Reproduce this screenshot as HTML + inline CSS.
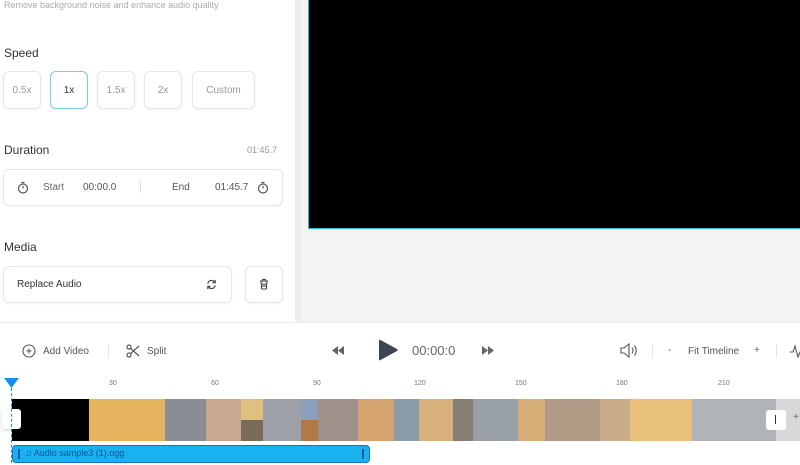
<!DOCTYPE html>
<html><head><meta charset="utf-8"><style>
*{box-sizing:border-box;margin:0;padding:0}
body{width:800px;height:465px;overflow:hidden;font-family:"Liberation Sans",sans-serif;background:#fff;position:relative;color:#333}
.a{position:absolute}
.btn{position:absolute;border:1px solid #e5e7ea;border-radius:6px;background:#fff;font-size:10px;color:#999;display:flex;align-items:center;justify-content:center;box-shadow:0 1px 2px rgba(0,0,0,.05)}
.h{font-size:12px;color:#333;position:absolute;left:4px}
.t{font-size:10px;color:#444}
.tick{position:absolute;top:405px;width:1px;height:4px;background:#ccc}
.lab{position:absolute;top:380px;font-size:7px;color:#777}
</style></head><body>
<div class="a" style="left:0;top:0;width:295px;height:322px;background:#fff"></div>
<div class="a" style="left:295px;top:0;width:6px;height:322px;background:#ededee"></div>
<div class="a" style="left:301px;top:0;width:499px;height:322px;background:#f4f4f5"></div>
<div class="a" style="left:308px;top:-2px;width:494px;height:231px;background:#000;border:1.5px solid #2ab7c9;border-top:none;border-right:none"></div>

<div class="a" style="left:4px;top:0;font-size:9px;color:#aaa">Remove background noise and enhance audio quality</div>
<div class="h" style="top:46px">Speed</div>
<div class="btn" style="left:3px;top:71px;width:38px;height:38px">0.5x</div>
<div class="btn" style="left:50px;top:71px;width:38px;height:38px;border-color:#7fcbe0;color:#333">1x</div>
<div class="btn" style="left:97px;top:71px;width:38px;height:38px">1.5x</div>
<div class="btn" style="left:144px;top:71px;width:38px;height:38px">2x</div>
<div class="btn" style="left:192px;top:71px;width:63px;height:38px">Custom</div>
<div class="h" style="top:143px">Duration</div>
<div class="a" style="left:247px;top:145px;font-size:9px;color:#999">01:45.7</div>
<div class="btn" style="left:3px;top:169px;width:280px;height:37px"></div>
<svg class="a" style="left:17px;top:181px" width="12" height="13" viewBox="0 0 12 13"><circle cx="6" cy="7.5" r="4.5" fill="none" stroke="#555" stroke-width="1.2"/><path d="M4.5 1.5h3M6 7.5V5" stroke="#555" stroke-width="1.2"/></svg>
<div class="a t" style="left:43px;top:182px;color:#666">Start</div>
<div class="a t" style="left:83px;top:182px;color:#555">00:00.0</div>
<div class="a" style="left:140px;top:181px;width:1px;height:12px;background:#ddd"></div>
<div class="a t" style="left:172px;top:182px;color:#555">End</div>
<div class="a t" style="left:215px;top:182px;color:#555">01:45.7</div>
<svg class="a" style="left:257px;top:181px" width="12" height="13" viewBox="0 0 12 13"><circle cx="6" cy="7.5" r="4.5" fill="none" stroke="#555" stroke-width="1.2"/><path d="M4.5 1.5h3M6 7.5V5" stroke="#555" stroke-width="1.2"/></svg>
<div class="h" style="top:240px">Media</div>
<div class="btn" style="left:3px;top:266px;width:229px;height:37px"></div>
<div class="a t" style="left:17px;top:279px;color:#333">Replace Audio</div>
<svg class="a" style="left:206px;top:279px" width="11" height="11" viewBox="0 0 12 12"><path d="M2 5a4 4 0 0 1 7-2l1 1M10 7a4 4 0 0 1-7 2l-1-1" fill="none" stroke="#444" stroke-width="1.3"/><path d="M10 1v3H7M2 11V8h3" fill="none" stroke="#444" stroke-width="1.3"/></svg>
<div class="btn" style="left:245px;top:266px;width:38px;height:37px"></div>
<svg class="a" style="left:259px;top:278px" width="10" height="12" viewBox="0 0 10 12"><path d="M1 3h8M3.5 3V1.5h3V3M2 3l.7 8h4.6L8 3M4 5v4M6 5v4" fill="none" stroke="#444" stroke-width="1.1"/></svg>

<div class="a" style="left:0;top:322px;width:800px;height:1px;background:#eee"></div>
<svg class="a" style="left:22px;top:344px" width="14" height="14"><circle cx="7" cy="7" r="6" fill="none" stroke="#555" stroke-width="1.1"/><path d="M7 4.5v5M4.5 7h5" stroke="#555" stroke-width="1.1"/></svg>
<div class="a t" style="left:43px;top:346px;color:#555">Add Video</div>
<div class="a" style="left:108px;top:344px;width:1px;height:14px;background:#e5e5e5"></div>
<svg class="a" style="left:126px;top:344px" width="14" height="14" viewBox="0 0 14 14"><circle cx="3" cy="3" r="2" fill="none" stroke="#555" stroke-width="1.2"/><circle cx="3" cy="11" r="2" fill="none" stroke="#555" stroke-width="1.2"/><path d="M4.5 4.3L13 12M4.5 9.7L13 2" stroke="#555" stroke-width="1.2"/></svg>
<div class="a t" style="left:147px;top:346px;color:#555">Split</div>
<svg class="a" style="left:332px;top:346px" width="12" height="9"><path d="M6 0v9L0 4.5zM12 0v9L6 4.5z" fill="#666"/></svg>
<svg class="a" style="left:378px;top:339px" width="20" height="22"><path d="M1 1.5Q1 0 2.5 1L19 10Q20 11 19 12L2.5 21Q1 22 1 20.5z" fill="#3d4656"/></svg>
<div class="a" style="left:412px;top:343px;font-size:13px;color:#666">00:00:0</div>
<svg class="a" style="left:482px;top:346px" width="12" height="9"><path d="M0 0v9L6 4.5zM6 0v9L12 4.5z" fill="#666"/></svg>
<svg class="a" style="left:620px;top:343px" width="18" height="15" viewBox="0 0 18 15"><path d="M1 5h3l5-4v13l-5-4H1z" fill="none" stroke="#555" stroke-width="1.1"/><path d="M12 4.5q2 3 0 6M14.5 2.5q3.5 5 0 10" fill="none" stroke="#555" stroke-width="1.1"/></svg>
<div class="a" style="left:652px;top:344px;width:1px;height:14px;background:#e5e5e5"></div>
<div class="a t" style="left:668px;top:345px;color:#666">-</div>
<div class="a t" style="left:688px;top:346px;color:#555">Fit Timeline</div>
<div class="a t" style="left:754px;top:345px;color:#666">+</div>
<div class="a" style="left:776px;top:344px;width:1px;height:14px;background:#e5e5e5"></div>
<svg class="a" style="left:790px;top:344px" width="12" height="14"><path d="M0 8h3l2-6 3 11 2-5h2" fill="none" stroke="#555" stroke-width="1.1"/></svg>

<div class="lab" style="left:109px">30</div><div class="lab" style="left:211px">60</div><div class="lab" style="left:313px">90</div><div class="lab" style="left:414px">120</div><div class="lab" style="left:515px">150</div><div class="lab" style="left:616px">180</div><div class="lab" style="left:718px">210</div>
<div id="ticks"></div>
<svg class="a" style="left:0;top:399px" width="800" height="44">
<rect x="12" y="0" width="77" height="42" fill="#000"/>
<rect x="89" y="0" width="76" height="42" fill="#e6b45e"/>
<rect x="165" y="0" width="41" height="42" fill="#8a8e94"/>
<rect x="206" y="0" width="35" height="42" fill="#c8a890"/>
<rect x="241" y="0" width="22" height="21" fill="#e0c080"/><rect x="241" y="21" width="22" height="21" fill="#7a6a58"/>
<rect x="263" y="0" width="38" height="42" fill="#9ea2a8"/>
<rect x="301" y="0" width="17" height="21" fill="#8aa0bc"/><rect x="301" y="21" width="17" height="21" fill="#b07a48"/>
<rect x="318" y="0" width="40" height="42" fill="#a0928a"/>
<rect x="358" y="0" width="36" height="42" fill="#d6a470"/>
<rect x="394" y="0" width="25" height="42" fill="#8a9cac"/>
<rect x="419" y="0" width="34" height="42" fill="#d8b07c"/>
<rect x="453" y="0" width="20" height="42" fill="#857e74"/>
<rect x="473" y="0" width="45" height="42" fill="#9aa0a8"/>
<rect x="518" y="0" width="27" height="42" fill="#d6ae78"/>
<rect x="545" y="0" width="55" height="42" fill="#b09a86"/>
<rect x="600" y="0" width="30" height="42" fill="#c8ac88"/>
<rect x="630" y="0" width="62" height="42" fill="#e8c07a"/>
<rect x="692" y="0" width="84" height="42" fill="#b0b4b8"/>
<rect x="776" y="0" width="24" height="42" fill="#d8d8da"/>
</svg>
<div class="a" style="left:2px;top:409px;width:19px;height:20px;background:#fff;border-radius:3px;box-shadow:0 1px 3px rgba(0,0,0,.2)"></div>
<div class="a" style="left:766px;top:410px;width:20px;height:20px;background:#fff;border-radius:3px"></div>
<div class="a" style="left:775px;top:415px;width:1px;height:9px;background:#333"></div>
<div class="a" style="left:793px;top:412px;font-size:10px;color:#666">+</div>
<div class="a" style="left:12px;top:445px;width:358px;height:18px;background:#18b2f0;border:1.5px solid #1a6fd6;border-radius:4px"></div>
<div class="a" style="left:25px;top:448px;font-size:9px;color:#1a4f98">♫ Audio sample3 (1).ogg</div>
<div class="a" style="left:18px;top:449px;width:2px;height:10px;background:#1a5aa8"></div>
<div class="a" style="left:362px;top:449px;width:2px;height:10px;background:#1a5aa8"></div>
<div class="a" style="left:11px;top:388px;width:1px;height:75px;border-left:1px dashed #1a8ee6"></div>
<svg class="a" style="left:4px;top:378px" width="15" height="12"><path d="M0 0h15L7.5 10z" fill="#1a8ee6"/></svg>
<script>
var s='';for(var x=11;x<780;x+=17){s+='<div class="tick" style="left:'+x+'px"></div>';}document.getElementById('ticks').innerHTML=s;
</script>
</body></html>
